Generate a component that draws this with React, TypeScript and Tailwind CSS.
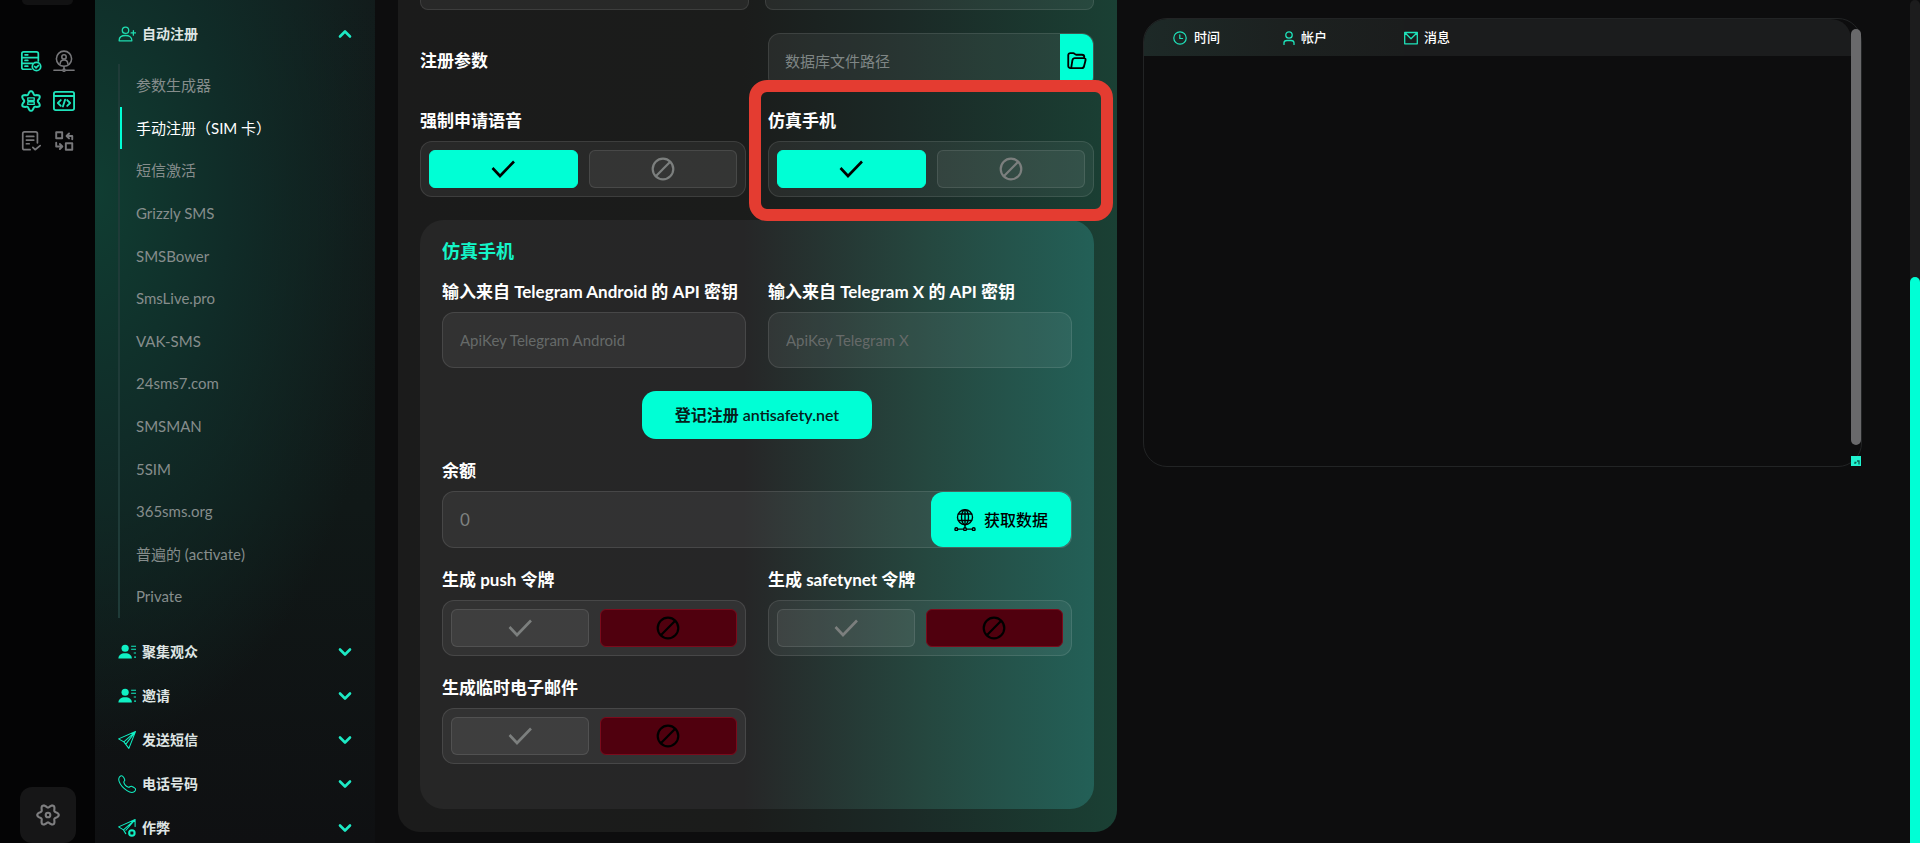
import { useId, useState, type ReactNode } from "react";

type IconProps = { className?: string };

function Svg({ className, box = 24, width = 1.5, children }: IconProps & { box?: number; width?: number; children: ReactNode }) {
  return (
    <svg
      viewBox={`0 0 ${box} ${box}`}
      fill="none"
      stroke="currentColor"
      strokeWidth={width}
      strokeLinecap="round"
      strokeLinejoin="round"
      aria-hidden="true"
      className={className}
    >
      {children}
    </svg>
  );
}

// Outline of a gear with six rounded lobes; `turn` is the angle of the first lobe in degrees.
function gearOutline(turn: number) {
  const points = Array.from({ length: 72 }, (_, i) => {
    const deg = i * 5;
    const wave = Math.cos((6 * (deg - turn) * Math.PI) / 180);
    const r = 9.1 + 1.7 * wave;
    const a = (deg * Math.PI) / 180;
    return `${(12 + r * Math.cos(a)).toFixed(2)} ${(12 + r * Math.sin(a)).toFixed(2)}`;
  });
  return `M${points.join("L")}Z`;
}

const ServerIcon = (p: IconProps) => (
  <Svg {...p} width={1.9}>
    <path d="M12 21H4a2 2 0 0 1-2-2V4a2 2 0 0 1 2-2h14a2 2 0 0 1 2 2v8M2 8.300h18M2 14.500h12M5.500 5.200h3M5.500 11.400h3M5.500 17.600h3" />
    <circle cx="18" cy="18" r="4.600" />
    <path d="m16 18 1.500 1.500 2.700-2.700" />
  </Svg>
);

const LocationUserIcon = (p: IconProps) => (
  <Svg {...p} width={1.700}>
    <circle cx="12" cy="9.500" r="8.300" />
    <circle cx="12" cy="7.500" r="2.400" />
    <path d="M7.800 15c.2-3 1.800-4 4.200-4s4 1 4.200 4M12 18v3M1 22h9M14 22h9" />
    <circle cx="12" cy="22" r="1.200" />
  </Svg>
);

const GearServerIcon = (p: IconProps) => (
  <Svg {...p} width={2.200}>
    <path d={gearOutline(30)} />
    <path d="M8.500 8.600h7v2.800h-7zM8.500 12.900h7v2.800h-7z" strokeWidth={1.500} />
  </Svg>
);

const GearIcon = (p: IconProps) => (
  <Svg {...p} width={2.100}>
    <path d={gearOutline(0)} />
    <circle cx="12" cy="12" r="2.300" />
  </Svg>
);

const CodeWindowIcon = (p: IconProps) => (
  <Svg {...p} width={2}>
    <rect x="1" y="2" width="22" height="20" rx="2" />
    <path d="M1 6.500h22M8.500 11l-3.200 3.200 3.200 3.200M15.500 11l3.200 3.200-3.200 3.200M13.200 10.500l-2.400 7.500" />
  </Svg>
);

const NoteCheckIcon = (p: IconProps) => (
  <Svg {...p} width={1.900}>
    <path d="M11 21.500H5a2 2 0 0 1-2-2V4a2 2 0 0 1 2-2h12a2 2 0 0 1 2 2v10M7 7h8M7 11h8M7 15h3M14 19l2.500 2.500L22 17" />
  </Svg>
);

const SwapIcon = (p: IconProps) => (
  <Svg {...p} width={2.100}>
    <rect x="3.500" y="2.500" width="6.500" height="6.500" />
    <rect x="14" y="14.500" width="7" height="7" />
    <path d="M21 10V6.500h-6M17.500 3.800 14.800 6.500l2.700 2.700M3.500 14v4h6M7.500 15.300l2.700 2.700-2.700 2.700" />
  </Svg>
);

const UserPlusIcon = (p: IconProps) => (
  <Svg {...p} width={1.700}>
    <circle cx="10" cy="7" r="4.300" />
    <path d="M1.500 20.500c0-4.500 3.500-6.500 8.500-6.500s8.500 2 8.500 6.500c0 .5-.3.800-.8.800H2.300c-.5 0-.8-.3-.8-.8zM20.500 7.500v6M17.500 10.500h6" />
  </Svg>
);

const UserListIcon = ({ className }: IconProps) => (
  <svg viewBox="0 0 24 24" fill="currentColor" aria-hidden="true" className={className}>
    <circle cx="9.500" cy="7" r="4.800" />
    <path d="M.5 20.800C.5 16 4 13.500 9.500 13.500s9 2.500 9 7.300z" />
    <path d="M17.500 3.500H24v1.500h-6.500zM17.500 7.500H24v1.500h-6.500zM21 12.500h3V14h-3zM21.500 18h2.500v1.500h-2.500z" />
  </svg>
);

const PlaneIcon = (p: IconProps) => (
  <Svg {...p} width={1.400}>
    <path d="M23.300.8.8 10.500l7 4 6.700 8.700zM23.300.8 7.800 14.500M23.300.8 10.500 17.500" />
  </Svg>
);

const PhoneIcon = (p: IconProps) => (
  <Svg {...p} width={1.400}>
    <path d="M1.500 3.500C2.500 1.500 4.500.5 6 1.500c1.500 1.200 2.500 3.300 3 4.800.5 1.300-1.500 2-1.200 3.400.6 2.600 3.600 5.700 6.300 6.500 1.500.5 2-1.700 3.700-1.200 1.700.6 3.700 1.500 5.200 3 1 1.200 0 4-2 4.800-2.500 1-6 0-9-2C7 17.500 3 13 1.500 8.500.9 6.700.8 5 1.500 3.500z" />
  </Svg>
);

const PlaneStopIcon = (p: IconProps) => (
  <Svg {...p} width={1.400}>
    <path d="M22.800 10V.8L.8 10.500l6.500 4 3 5M22.800.8 7.300 14.500M22.800.8 10.500 15" />
    <circle cx="18.500" cy="18.500" r="5" fill="currentColor" stroke="none" />
    <rect x="16.500" y="16.500" width="4" height="4" rx=".5" fill="#0e1414" stroke="none" />
  </Svg>
);

const Chevron = ({ up, className }: IconProps & { up?: boolean }) => (
  <Svg className={className} box={14} width={2.600}>
    <path d={up ? "M2 9.500 7 4.500l5 5" : "M2 4.500l5 5 5-5"} />
  </Svg>
);

const CheckIcon = (p: IconProps) => (
  <Svg {...p} width={2.600}>
    <path d="m1.500 11 7.500 8L23 4.500" strokeLinecap="butt" strokeLinejoin="miter" />
  </Svg>
);

const BanIcon = (p: IconProps) => (
  <Svg {...p} width={2.200}>
    <circle cx="12" cy="12" r="10.300" />
    <path d="M4.800 19.200 19.200 4.800" />
  </Svg>
);

const FolderIcon = (p: IconProps) => (
  <Svg {...p} width={2.200}>
    <path d="M5 20.500H4A2.500 2.500 0 0 1 1.500 18V5A2.500 2.500 0 0 1 4 2.500h3.500c1.500 0 2 2 3.500 2h7c1.800 0 2.800 1 2.800 3M5 20.500h12.500c2 0 2.700-.7 3-2.500l1.700-6.500c.5-2.200-.4-3-2.200-3H9.500c-2 0-2.600.8-3 2.500z" />
  </Svg>
);

const GlobeIcon = (p: IconProps) => (
  <Svg {...p} width={1.500}>
    <circle cx="12" cy="9" r="8.200" />
    <ellipse cx="12" cy="9" rx="3.800" ry="8.200" />
    <path d="M12 .8V20M4.800 5.500h14.400M4.800 12.500h14.400M4.200 22h6M13.800 22h6" />
    <circle cx="12" cy="22" r="1.500" />
    <circle cx="2.500" cy="22" r="1.500" />
    <circle cx="21.500" cy="22" r="1.500" />
  </Svg>
);

const ClockIcon = (p: IconProps) => (
  <Svg {...p} box={14} width={1.200}>
    <circle cx="7" cy="7" r="6.200" />
    <path d="M6.800 3.800v3.700h2.800" />
  </Svg>
);

const PersonIcon = (p: IconProps) => (
  <Svg {...p} box={14} width={1.300}>
    <circle cx="7" cy="4" r="3.200" />
    <path d="M2 13.400v-1.600C2 10.300 3.300 9.500 5 9.500h4c1.700 0 3 .8 3 2.300v1.600" />
  </Svg>
);

const MailIcon = (p: IconProps) => (
  <Svg {...p} box={14} width={1.300}>
    <path d="M.7 1.500h12.600v11.300H.7zM.7 1.500 7 7.800l6.300-6.300" />
  </Svg>
);

const railTools = [
  { name: "服务器", Icon: ServerIcon, on: true },
  { name: "位置", Icon: LocationUserIcon, on: false },
  { name: "服务设置", Icon: GearServerIcon, on: true },
  { name: "代码", Icon: CodeWindowIcon, on: true },
  { name: "任务", Icon: NoteCheckIcon, on: false },
  { name: "转换", Icon: SwapIcon, on: false },
];

const services = [
  "参数生成器",
  "手动注册（SIM 卡）",
  "短信激活",
  "Grizzly SMS",
  "SMSBower",
  "SmsLive.pro",
  "VAK-SMS",
  "24sms7.com",
  "SMSMAN",
  "5SIM",
  "365sms.org",
  "普遍的 (activate)",
  "Private",
];

const sections = [
  { name: "聚集观众", Icon: UserListIcon },
  { name: "邀请", Icon: UserListIcon },
  { name: "发送短信", Icon: PlaneIcon },
  { name: "电话号码", Icon: PhoneIcon },
  { name: "作弊", Icon: PlaneStopIcon },
];

function Rail() {
  return (
    <aside className="flex w-[95px] shrink-0 flex-col bg-[#040405] px-5">
      <div className="ml-0.5 h-[5px] w-[51px] rounded-b-xl bg-[#121213]" />
      <div className="mt-[45px] grid grid-cols-[22px_22px] gap-x-[11px] gap-y-[18px]">
        {railTools.map(({ name, Icon, on }) => (
          <button key={name} type="button" aria-label={name} className={on ? "text-[#1fe3bb]" : "text-[#77777a]"}>
            <Icon className="size-[22px]" />
          </button>
        ))}
      </div>
      <button
        type="button"
        aria-label="设置"
        className="mt-auto flex size-14 items-center justify-center rounded-xl bg-[#161617] text-[#7e7e80]"
      >
        <GearIcon className="size-6" />
      </button>
    </aside>
  );
}

function Sidebar() {
  const [active, setActive] = useState(1);
  return (
    <nav className="flex w-[280px] shrink-0 flex-col bg-[#101314] bg-[radial-gradient(ellipse_300px_560px_at_0px_190px,#103d32_0%,#102c28_45%,transparent_100%),linear-gradient(180deg,#121b1b_0%,#101817_60%,#0f1012_100%)] pl-[23px]">
      <button type="button" className="mt-3 flex h-11 shrink-0 items-center pr-[23px]">
        <UserPlusIcon className="size-[18px] shrink-0 text-[#1fdcb0]" />
        <span className="ml-1.5 text-sm font-bold text-[#dfe5e4]">自动注册</span>
        <Chevron up className="ml-auto size-3.5 text-[#1de9c4]" />
      </button>
      <ul className="mt-2 grid h-[554px] shrink-0 auto-rows-fr border-l-2 border-[#1f3b38]">
        {services.map((name, i) => (
          <li key={name} className="flex">
            <a
              href="#"
              onClick={() => setActive(i)}
              aria-current={i === active ? "page" : undefined}
              className={
                i === active
                  ? "flex w-full items-center border-l-2 border-[#00ffd5] pl-3.5 text-[15px] text-white"
                  : "flex w-full items-center pl-4 text-[15px] text-[#868d8c]"
              }
            >
              {name}
            </a>
          </li>
        ))}
      </ul>
      <div className="mt-3">
        {sections.map(({ name, Icon }) => (
          <button key={name} type="button" className="flex h-11 w-full items-center pr-[23px]">
            <Icon className="size-[18px] shrink-0 text-[#10f0c4]" />
            <span className="ml-1.5 text-sm font-bold text-[#dfe5e4]">{name}</span>
            <Chevron className="ml-auto size-3.5 text-[#1de9c4]" />
          </button>
        ))}
      </div>
    </nav>
  );
}

function Toggle({ label, initial, children }: { label: string; initial: boolean; children?: ReactNode }) {
  const [on, setOn] = useState(initial);
  const id = useId();
  const idle = "border-white/10 bg-white/6 text-[#7c7f7e]";
  return (
    <div className="relative" role="group" aria-labelledby={id}>
      <div id={id} className="text-[17px] leading-6 font-bold text-white">
        {label}
      </div>
      <div className="mt-2 flex h-14 gap-[11px] rounded-xl border border-white/10 bg-white/6 p-2">
        <button
          type="button"
          aria-label="是"
          aria-pressed={on}
          onClick={() => setOn(true)}
          className={`flex flex-1 items-center justify-center rounded-md border ${on ? "border-[#00ffd5] bg-[#00ffd5] text-black" : idle}`}
        >
          <CheckIcon className="size-6" />
        </button>
        <button
          type="button"
          aria-label="否"
          aria-pressed={!on}
          onClick={() => setOn(false)}
          className={`flex flex-1 items-center justify-center rounded-md border ${on ? idle : "border-[#7a0b1c] bg-[#50000e] text-black"}`}
        >
          <BanIcon className="size-6" />
        </button>
      </div>
      {children}
    </div>
  );
}

function KeyField({ label, placeholder }: { label: string; placeholder: string }) {
  const id = useId();
  return (
    <div>
      <label htmlFor={id} className="block text-[17px] leading-6 font-bold whitespace-nowrap text-white">
        {label}
      </label>
      <input
        id={id}
        placeholder={placeholder}
        className="mt-2 h-14 w-full rounded-xl border border-white/10 bg-white/6 px-[17px] text-[15px] text-white outline-none placeholder:text-[#666a69]"
      />
    </div>
  );
}

function SettingsPanel() {
  return (
    <section className="rounded-b-[22px] bg-[linear-gradient(90deg,#1b1b1b_0%,#1b1c1b_48%,#1b2926_70%,#1a4034_100%)] pr-[23px] pb-[23px] pl-[22px]">
      <div className="grid grid-cols-2 gap-4">
        <div className="h-2.5 rounded-b-lg border border-t-0 border-white/10 bg-white/6" />
        <div className="h-2.5 rounded-b-lg border border-t-0 border-white/10 bg-white/6" />
      </div>
      <div className="mt-[23px] grid grid-cols-2 items-center gap-[22px]">
        <label htmlFor="db-path" className="text-[17px] leading-6 font-bold text-white">
          注册参数
        </label>
        <div className="flex h-14 overflow-hidden rounded-xl border border-white/10 bg-white/6">
          <input
            id="db-path"
            placeholder="数据库文件路径"
            className="min-w-0 flex-1 bg-transparent px-4 text-[15px] text-white outline-none placeholder:text-[#7f8685]"
          />
          <button type="button" aria-label="选择文件" className="flex w-[33px] items-center justify-center bg-[#00ffd5] text-black">
            <FolderIcon className="size-5" />
          </button>
        </div>
      </div>
      <div className="mt-5 grid grid-cols-2 gap-[22px]">
        <Toggle label="强制申请语音" initial />
        <Toggle label="仿真手机" initial>
          <div className="pointer-events-none absolute -inset-x-[19px] -top-[29px] -bottom-6 z-10 rounded-[18px] border-12 border-[#e43c31]" />
        </Toggle>
      </div>

      <div className="mt-[23px] rounded-3xl bg-[linear-gradient(90deg,#262626_0%,#262627_48%,#25473f_75%,#236057_100%)] px-[22px] pt-[17px] pb-[45px]">
        <h2 className="text-[18px] leading-7 font-bold text-[#14f5c8]">仿真手机</h2>
        <div className="mt-[15px] grid grid-cols-2 gap-[22px]">
          <KeyField label="输入来自 Telegram Android 的 API 密钥" placeholder="ApiKey Telegram Android" />
          <KeyField label="输入来自 Telegram X 的 API 密钥" placeholder="ApiKey Telegram X" />
        </div>
        <div className="mt-[23px] flex justify-center">
          <a href="#" className="flex h-12 items-center rounded-[14px] bg-[#00ffd5] px-[33px] text-base font-semibold whitespace-nowrap text-[#06201b]">
            登记注册 antisafety.net
          </a>
        </div>
        <label htmlFor="balance" className="mt-5 block text-[17px] leading-6 font-bold text-white">
          余额
        </label>
        <div className="mt-2 flex h-[57px] rounded-xl border border-white/10 bg-white/6">
          <input
            id="balance"
            placeholder="0"
            className="min-w-0 flex-1 bg-transparent px-[17px] text-[17px] text-white outline-none placeholder:text-[#7f8281]"
          />
          <button type="button" className="flex w-[140px] items-center justify-center gap-2 rounded-xl bg-[#00ffd5] text-base font-medium text-black">
            <GlobeIcon className="size-[22px]" />
            获取数据
          </button>
        </div>
        <div className="mt-5 grid grid-cols-2 gap-x-[22px] gap-y-5">
          <Toggle label="生成 push 令牌" initial={false} />
          <Toggle label="生成 safetynet 令牌" initial={false} />
          <Toggle label="生成临时电子邮件" initial={false} />
        </div>
      </div>
    </section>
  );
}

function LogPanel() {
  const head = "p-0 text-left text-[13px] font-medium text-white";
  return (
    <section className="mt-[18px] flex h-[449px] rounded-[24px] border border-[#222425]">
      <div className="min-w-0 flex-1">
        <table className="w-full table-fixed border-separate border-spacing-0">
          <thead>
            <tr className="h-[37px]">
              <th scope="col" className={`${head} w-[138px] rounded-tl-[23px] bg-[linear-gradient(90deg,#1d2927,#1c2120)] pl-[29px]`}>
                <span className="flex items-center gap-[7px]">
                  <ClockIcon className="size-3.5 text-[#1fe3bb]" />
                  时间
                </span>
              </th>
              <th scope="col" className={`${head} w-[122px] bg-[linear-gradient(90deg,#1c2120,#1b1d1d)]`}>
                <span className="flex items-center gap-[5px]">
                  <PersonIcon className="size-3.5 text-[#1fe3bb]" />
                  帐户
                </span>
              </th>
              <th scope="col" className={`${head} rounded-tr-[20px] bg-[#1b1c1d]`}>
                <span className="flex items-center gap-[6px]">
                  <MailIcon className="size-3.5 text-[#1fe3bb]" />
                  消息
                </span>
              </th>
            </tr>
          </thead>
        </table>
      </div>
      <div className="flex w-2.5 flex-col justify-between pt-2.5">
        <div className="h-[416px] rounded-full bg-[#69696b]" />
        <svg viewBox="0 0 10 10" className="size-2.5 bg-[#20f2cf]" aria-hidden="true">
          <path d="M4 8V6.500h1.500M6 5h2v3.500" fill="none" stroke="#0b5f50" strokeWidth="1.300" />
        </svg>
      </div>
    </section>
  );
}

export default function App() {
  return (
    <div className="flex h-screen overflow-hidden bg-[#0d0d0e] font-['Lato','Noto_Sans_CJK_SC',sans-serif] text-white">
      <Rail />
      <Sidebar />
      <main className="grid min-w-0 flex-1 grid-cols-2 items-start gap-[26px] pr-12 pl-[23px]">
        <SettingsPanel />
        <LogPanel />
      </main>
      <div className="flex w-2.5 shrink-0 flex-col justify-end rounded-t-full bg-[#1c1c1d]">
        <div className="h-[566px] rounded-t-full bg-[#00ffd5]" />
      </div>
    </div>
  );
}
